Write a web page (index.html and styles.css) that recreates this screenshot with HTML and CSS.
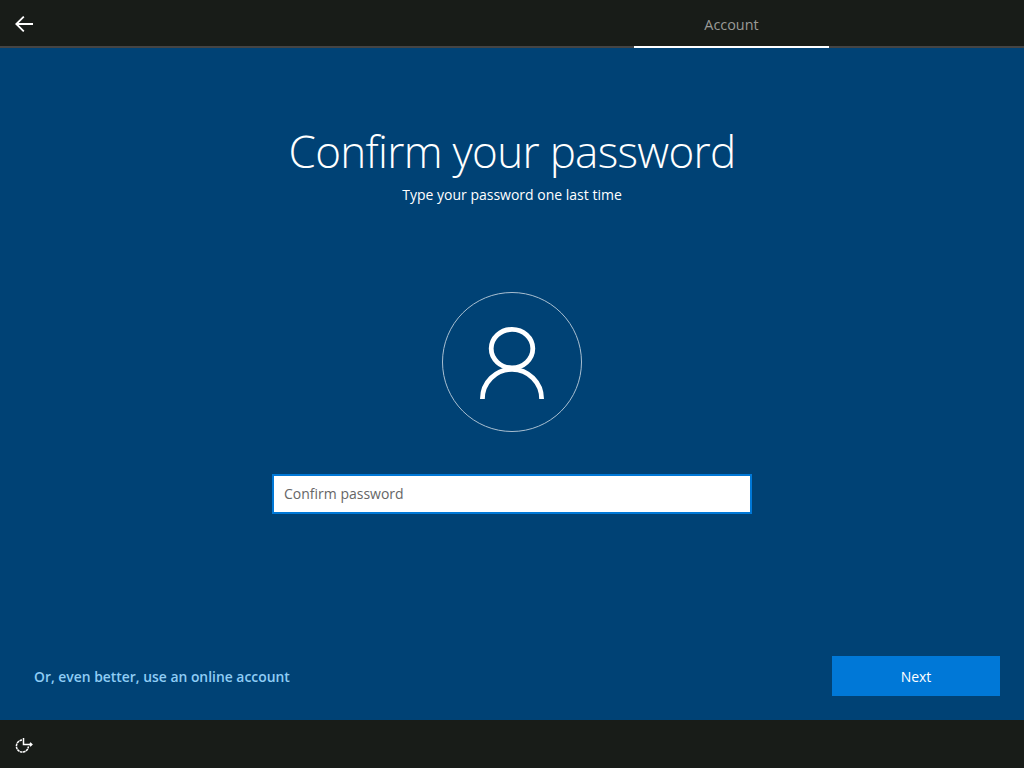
FILE: index.html
```html
<!DOCTYPE html>
<html lang="en">
<head>
<meta charset="utf-8">
<title>Confirm your password</title>
<link rel="stylesheet" href="styles.css">
</head>
<body>
<div class="screen">
  <header class="topbar">
    <button class="back" aria-label="Back">
      <svg width="18" height="16" viewBox="0 0 18 16" fill="none" stroke="#fff" stroke-width="1.8"><path d="M18 8H1.5M8.8.6 1.3 8l7.5 7.4"/></svg>
    </button>
    <div class="tab">Account</div>
  </header>
  <main class="content">
    <h1 class="title">Confirm your password</h1>
    <p class="subtitle">Type your password one last time</p>
    <div class="avatar">
      <svg width="64" height="72" viewBox="0 0 64 72" fill="none" stroke="#fff" stroke-width="4.8"><ellipse cx="32" cy="21.6" rx="20.8" ry="19.2"/><path d="M2.4 72a29.6 29.6 0 0 1 59.2 0"/></svg>
    </div>
    <input class="field" type="password" placeholder="Confirm password">
    <div class="actions">
      <a class="link" href="#">Or, even better, use an online account</a>
      <button class="next">Next</button>
    </div>
  </main>
  <footer class="bottombar">
    <svg width="18" height="17" viewBox="0 0 18 17" fill="none" stroke="#fff" stroke-width="1.5"><path d="M7 3.1A6 6 0 1 0 13.4 9.5" stroke-dasharray="2.6 .5"/><path d="M8.5 1v6.5h7.5M15 5.8l1.8 1.7L15 9.2"/></svg>
  </footer>
</div>
</body>
</html>
```
FILE: styles.css
```css
* { box-sizing: border-box; }
html, body { margin: 0; height: 100%; }
body { font-family: "Open Sans", "Noto Sans", sans-serif; background: #004275; color: #fff; }
.screen { display: flex; flex-direction: column; height: 768px; overflow: hidden; }
.topbar { height: 48px; flex: none; display: flex; justify-content: space-between; background: #181c18; border-bottom: 2px solid #444; padding-right: 195px; }
.back { width: 48px; height: 46px; padding: 2px 0 0 15px; display: flex; align-items: center; background: none; border: 0; }
.tab { width: 195px; height: 48px; padding-top: 15px; border-bottom: 2px solid #fff; text-align: center; font-size: 14.4px; line-height: 20px; color: #9a9a96; }
.content { flex: 1; display: flex; flex-direction: column; align-items: center; padding: 0 24px 0 34px; }
.title { margin: 71px 0 0 -10px; font-size: 44px; letter-spacing: -0.7px; line-height: 64px; font-weight: 300; }
.subtitle { margin: 1px 0 0 -10px; font-size: 14px; line-height: 22px; }
.avatar { width: 140px; height: 140px; margin: 86px 0 0 -10px; padding-top: 2px; border: 1px solid #a9bfd1; border-radius: 50%; display: flex; align-items: center; justify-content: center; }
.field { width: 480px; height: 40px; margin: 42px 0 0 -10px; padding: 0 10px 2px; border: 2px solid #0078d7; background: #fff; font: 14px "Open Sans", sans-serif; }
.field::placeholder { color: #666; opacity: 1; }
.actions { align-self: stretch; display: flex; justify-content: space-between; align-items: center; margin-top: 142px; }
.link { color: #8fcdf5; font-size: 13.9px; font-weight: 600; text-decoration: none; }
.next { width: 168px; height: 40px; border: 0; background: #0078d7; color: #fff; font: 14px "Open Sans", sans-serif; }
.bottombar { height: 48px; flex: none; background: #181c18; display: flex; align-items: center; padding: 3px 0 0 15px; }
```
